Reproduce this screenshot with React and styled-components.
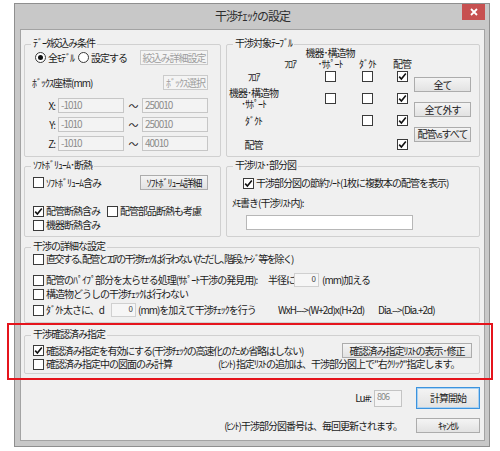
import React from "react";
import styled, { createGlobalStyle } from "styled-components";

const Global = createGlobalStyle`
  html, body { margin: 0; padding: 0; background: #ffffff; }
  body {
    font-family: "Noto Sans CJK JP", "Noto Sans", sans-serif;
    font-size: 10px;
    line-height: 12px;
    letter-spacing: -1px;
    color: #1c1c1c;
  }
  * { box-sizing: border-box; }
`;

const Page = styled.div`
  position: relative;
  width: 500px;
  height: 451px;
  padding: 3px 0 0 14px;
`;

const Win = styled.div`
  width: 476px;
  height: 444px;
  background: #c8c8c8;
  border: 1px solid #8f8f8f;
  display: flex;
  flex-direction: column;
  padding: 0 4px 5px 5px;
`;

const TitleBar = styled.div`
  height: 25px;
  display: grid;
  grid-template-columns: 1fr auto 1fr;
  align-items: start;
`;

const Title = styled.div`
  grid-column: 2;
  font-size: 12px;
  line-height: 24px;
  color: #2e2e2e;
`;

const Close = styled.div`
  grid-column: 3;
  justify-self: end;
  width: 23px;
  height: 16px;
  background: #c75050;
  display: flex;
  align-items: center;
  justify-content: center;
`;

const Client = styled.div`
  flex: 1;
  background: #f0f0f0;
  border: 1px solid #a3a3a3;
  padding: 14px 4px 0 3px;
  display: flex;
  flex-direction: column;
`;

const Pair = styled.div`
  display: grid;
  grid-template-columns: 197px 254px;
  column-gap: 5px;
  margin-top: ${(p) => p.$mt || 0}px;
`;

const Group = styled.section`
  position: relative;
  height: ${(p) => p.$h}px;
  margin-top: ${(p) => p.$mt || 0}px;
  border: 1px solid #d0d0d0;
  border-radius: 2px;
  padding: ${(p) => p.$pad || "0"};
`;

const Legend = styled.span`
  position: absolute;
  top: -8px;
  left: 6px;
  padding: 0 2px;
  background: #f0f0f0;
  white-space: nowrap;
`;

const Line = styled.div`
  display: flex;
  align-items: center;
  justify-content: ${(p) => p.$justify || "space-between"};
  gap: ${(p) => p.$gap || 0}px;
  height: ${(p) => p.$h}px;
  margin-top: ${(p) => p.$mt || 0}px;
  padding-left: ${(p) => p.$pl || 0}px;
  white-space: nowrap;
`;

const Btn = styled.button`
  width: ${(p) => p.$w}px;
  height: ${(p) => p.$h || 15}px;
  margin-left: ${(p) => p.$ml || 0}px;
  padding: 0;
  font: inherit;
  letter-spacing: -1px;
  color: ${(p) => (p.disabled ? "#9d9d9d" : "#1c1c1c")};
  background: ${(p) =>
    p.disabled ? "#f4f4f4" : "linear-gradient(#f4f4f4, #e2e2e2)"};
  border: 1px solid ${(p) => (p.disabled ? "#cbcbcb" : "#acacac")};
  border-radius: 0;
  white-space: nowrap;
  flex-shrink: 0;
`;

const DefaultBtn = styled(Btn)`
  border: 1px solid #3c93de;
  box-shadow: inset 0 0 0 1px #a9d1f2;
`;

const Small = styled.span`
  font-size: 8px;
`;

const Choices = styled.div`
  display: flex;
  gap: 4px;
`;

const Opt = styled.span`
  display: inline-flex;
  align-items: center;
  gap: 2px;
`;

const RadioDot = styled.span`
  width: 11px;
  height: 11px;
  border-radius: 50%;
  border: 1px solid #3a3a3a;
  background: #fff;
  display: flex;
  align-items: center;
  justify-content: center;
  &::after {
    content: "";
    width: 5px;
    height: 5px;
    border-radius: 50%;
    background: ${(p) => (p.$on ? "#111" : "transparent")};
  }
`;

const Box = styled.span`
  width: 11px;
  height: 11px;
  flex-shrink: 0;
  border: 1px solid #3a3a3a;
  background: #fff;
  display: flex;
  align-items: center;
  justify-content: center;
`;

const OptText = styled.span`
  display: inline-block;
  width: ${(p) => (p.$w ? `${p.$w}px` : "auto")};
  letter-spacing: ${(p) => p.$ls || -1}px;
  white-space: nowrap;
`;

const CoordRow = styled.div`
  display: grid;
  grid-template-columns: 26px 66px 18px 66px;
  height: 15px;
  margin-top: ${(p) => p.$mt || 0}px;
  align-items: center;
`;

const CoordLabel = styled.span`
  text-align: right;
  padding-right: 3px;
`;

const Field = styled.div`
  height: 15px;
  border: 1px solid #c6c6c6;
  background: #f3f3f3;
  color: #8c8c8c;
  padding: 0 2px;
  line-height: 12px;
`;

const Tilde = styled.span`
  text-align: center;
`;

const TableArea = styled.div`
  display: flex;
  padding: 2px 0 0 5px;
`;

const Matrix = styled.div`
  width: 182px;
  display: flex;
  flex-direction: column;
`;

const MRow = styled.div`
  display: grid;
  grid-template-columns: 43px 30px 50px 25px 10px 24px;
  height: ${(p) => p.$h}px;
  margin-top: ${(p) => p.$mt || 0}px;
  align-items: ${(p) => (p.$head ? "end" : "center")};
  justify-items: center;
  padding-bottom: ${(p) => (p.$head ? 2 : 0)}px;
  line-height: 11px;
  text-align: center;
  white-space: nowrap;
`;

const ButtonCol = styled.div`
  width: 57px;
  display: flex;
  flex-direction: column;
  gap: 10px;
  padding-top: 30px;
`;

const Memo = styled.div`
  width: 167px;
  height: 15px;
  margin: 5px 0 0 14px;
  background: #fff;
  border: 1px solid #b7b7b7;
`;

const NumBox = styled.div`
  width: 25px;
  height: 14px;
  flex-shrink: 0;
  border: 1px solid #d0d0d0;
  background: #f6f6f6;
  font-size: 8px;
  line-height: 9px;
  text-align: right;
  padding: 0 3px;
  color: #444;
`;

const Spaced = styled.span`
  display: inline-block;
  width: ${(p) => (p.$w ? `${p.$w}px` : "auto")};
  margin-left: ${(p) => p.$ml || 0}px;
  white-space: nowrap;
`;

const Footer = styled.div`
  margin-top: 13px;
  display: flex;
  flex-direction: column;
  align-items: flex-end;
`;

const FootRow = styled.div`
  display: flex;
  align-items: center;
  height: ${(p) => p.$h}px;
  margin-top: ${(p) => p.$mt || 0}px;
  white-space: nowrap;
`;

const LuBox = styled.div`
  width: 28px;
  height: 17px;
  margin: 0 14px 0 3px;
  border: 1px solid #c4c4c4;
  background: #f4f4f4;
  color: #8a8a8a;
  font-size: 9px;
  line-height: 11px;
  padding: 0 2px;
`;

const Callout = styled.div`
  position: absolute;
  left: 7px;
  top: 323px;
  width: 486px;
  height: 57px;
  border: 2px solid #e5141c;
  pointer-events: none;
`;

const Tick = () => (
  <svg width="9" height="9" viewBox="0 0 9 9">
    <path d="M1.2 4.6 L3.4 7 L7.8 1.6" fill="none" stroke="#111" strokeWidth="1.6" />
  </svg>
);

const Check = ({ on, label, w, ls }) => (
  <Opt>
    <Box>{on && <Tick />}</Box>
    {label != null && (
      <OptText $w={w} $ls={ls}>
        {label}
      </OptText>
    )}
  </Opt>
);

const Radio = ({ on, label }) => (
  <Opt>
    <RadioDot $on={on} />
    <OptText>{label}</OptText>
  </Opt>
);

export default function App() {
  return (
    <Page>
      <Global />
      <Win>
        <TitleBar>
          <Title>干渉ﾁｪｯｸの設定</Title>
          <Close>
            <svg width="8" height="8" viewBox="0 0 8 8">
              <path d="M1 1 L7 7 M7 1 L1 7" stroke="#fff" strokeWidth="1.8" />
            </svg>
          </Close>
        </TitleBar>
        <Client>
          <Pair>
            <Group $h={113} $pad="5px 12px 0 7px">
              <Legend>ﾃﾞｰﾀ絞込み条件</Legend>
              <Line $h={15} $pl={3}>
                <Choices>
                  <Radio on label="全ﾓﾃﾞﾙ" />
                  <Radio label="設定する" />
                </Choices>
                <Btn $w={68} disabled>絞込み詳細設定</Btn>
              </Line>
              <Line $h={15} $mt={10}>
                <span>ﾎﾞｯｸｽ座標(mm)</span>
                <Btn $w={45} disabled>ﾎﾞｯｸｽ選択</Btn>
              </Line>
              <CoordRow $mt={8}>
                <CoordLabel>X:</CoordLabel>
                <Field>-1010</Field>
                <Tilde>～</Tilde>
                <Field>250010</Field>
              </CoordRow>
              <CoordRow $mt={4}>
                <CoordLabel>Y:</CoordLabel>
                <Field>-1010</Field>
                <Tilde>～</Tilde>
                <Field>250010</Field>
              </CoordRow>
              <CoordRow $mt={4}>
                <CoordLabel>Z:</CoordLabel>
                <Field>-1010</Field>
                <Tilde>～</Tilde>
                <Field>40010</Field>
              </CoordRow>
            </Group>

            <Group $h={113}>
              <Legend>干渉対象ﾃｰﾌﾞﾙ</Legend>
              <TableArea>
                <Matrix>
                  <MRow $h={22} $head>
                    <span />
                    <span>ﾌﾛｱ</span>
                    <span>
                      機器･構造物
                      <br />
                      ･ｻﾎﾟｰﾄ
                    </span>
                    <span>ﾀﾞｸﾄ</span>
                    <span />
                    <span>配管</span>
                  </MRow>
                  <MRow $h={14}>
                    <span>ﾌﾛｱ</span>
                    <span />
                    <Check />
                    <Check />
                    <span />
                    <Check on />
                  </MRow>
                  <MRow $h={30}>
                    <span>
                      機器･構造物
                      <br />
                      ･ｻﾎﾟｰﾄ
                    </span>
                    <span />
                    <Check />
                    <Check />
                    <span />
                    <Check on />
                  </MRow>
                  <MRow $h={14}>
                    <span>ﾀﾞｸﾄ</span>
                    <span />
                    <span />
                    <Check />
                    <span />
                    <Check on />
                  </MRow>
                  <MRow $h={14} $mt={10}>
                    <span>配管</span>
                    <span />
                    <span />
                    <span />
                    <span />
                    <Check on />
                  </MRow>
                </Matrix>
                <ButtonCol>
                  <Btn $w={57}>全て</Btn>
                  <Btn $w={57}>全て外す</Btn>
                  <Btn $w={57}>
                    配管<Small>vs</Small>すべて
                  </Btn>
                </ButtonCol>
              </TableArea>
            </Group>
          </Pair>

          <Pair $mt={9}>
            <Group $h={71} $pad="8px 12px 0 8px">
              <Legend>ｿﾌﾄﾎﾞﾘｭｰﾑ･断熱</Legend>
              <Line $h={15}>
                <Check label="ｿﾌﾄﾎﾞﾘｭｰﾑ含み" />
                <Btn $w={68}>ｿﾌﾄﾎﾞﾘｭｰﾑ詳細</Btn>
              </Line>
              <Line $h={14} $mt={14} $justify="flex-start" $gap={7}>
                <Check on label="配管断熱含み" />
                <Check label="配管部品断熱も考慮" />
              </Line>
              <Line $h={14} $justify="flex-start">
                <Check label="機器断熱含み" />
              </Line>
            </Group>

            <Group $h={71} $pad="9px 8px 0 5px">
              <Legend>干渉ﾘｽﾄ･部分図</Legend>
              <Line $h={14} $pl={11} $justify="flex-start">
                <Check on label="干渉部分図の節約ｿｰﾄ(1枚に複数本の配管を表示)" />
              </Line>
              <Line $h={14} $mt={6} $justify="flex-start">
                <span>ﾒﾓ書き(干渉ﾘｽﾄ内):</span>
              </Line>
              <Memo />
            </Group>
          </Pair>

          <Group $h={76} $mt={10} $pad="4px 8px 0 8px">
            <Legend>干渉の詳細な設定</Legend>
            <Line $h={14} $justify="flex-start">
              <Check
                ls={-1.8}
                label="直交する､配管とﾌﾛｱの干渉ﾁｪｯｸは行わない(ただし､階段､ｹｰｼﾞ等を除く)"
              />
            </Line>
            <Line $h={14} $mt={7} $justify="flex-start">
              <Check w={222} label="配管のﾊﾟｲﾌﾟ部分を太らせる処理(ｻﾎﾟｰﾄ干渉の発見用):" />
              <Spaced $w={26}>半径に</Spaced>
              <NumBox>0</NumBox>
              <Spaced $ml={3}>(mm)加える</Spaced>
            </Line>
            <Line $h={14} $justify="flex-start">
              <Check label="構造物どうしの干渉ﾁｪｯｸは行わない" />
            </Line>
            <Line $h={14} $mt={2} $justify="flex-start">
              <Check w={65} label="ﾀﾞｸﾄ太さに、d" />
              <NumBox>0</NumBox>
              <Spaced $ml={2} $w={140}>(mm)を加えて干渉ﾁｪｯｸを行う</Spaced>
              <Spaced $w={100}>WxH---&gt;(W+2d)x(H+2d)</Spaced>
              <Spaced>Dia.--&gt;(Dia.+2d)</Spaced>
            </Line>
          </Group>

          <Group $h={39} $mt={12} $pad="7px 7px 0 8px">
            <Legend>干渉確認済み指定</Legend>
            <Line $h={15}>
              <Check
                on
                ls={-1.2}
                label="確認済み指定を有効にする(干渉ﾁｪｯｸの高速化のため省略はしない)"
              />
              <Btn $w={130}>確認済み指定ﾘｽﾄの表示･修正</Btn>
            </Line>
            <Line $h={12} $justify="flex-start">
              <Check w={172} label="確認済み指定中の図面のみ計算" />
              <span>(ﾋﾝﾄ) 指定ﾘｽﾄの追加は、干渉部分図上で"右ｸﾘｯｸ"指定します。</span>
            </Line>
          </Group>

          <Footer>
            <FootRow $h={22}>
              <span>Lu#:</span>
              <LuBox>806</LuBox>
              <DefaultBtn $w={64} $h={22}>計算開始</DefaultBtn>
            </FootRow>
            <FootRow $h={15} $mt={9}>
              <span>(ﾋﾝﾄ)干渉部分図番号は、毎回更新されます。</span>
              <Btn $w={64} $ml={14}>ｷｬﾝｾﾙ</Btn>
            </FootRow>
          </Footer>
        </Client>
      </Win>
      <Callout />
    </Page>
  );
}
